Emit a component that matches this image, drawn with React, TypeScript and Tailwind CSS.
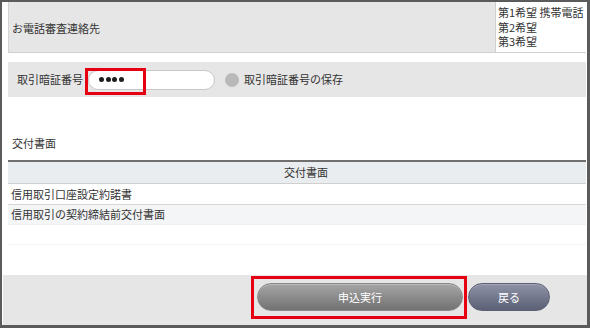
import React from "react";

export default function App() {
  const font = { fontFamily: '"Noto Sans CJK JP", "Noto Sans", sans-serif' };
  return (
    <div
      className="w-[590px] h-[328px] bg-white border-t-2 border-l-2 border-r-[3px] border-b-[3px] border-[#5b5b5b] flex flex-col overflow-hidden text-[11px] text-[#333]"
      style={font}
    >
      <div className="pl-[6px] pr-[1px] flex flex-col">
        {/* Row 1 */}
        <div className="flex h-[51px] border-b border-[#cfcfcf]">
          <div className="flex-1 bg-[#e6e6e6] border-l border-[#d4d4d4] flex items-center pl-[3px] pt-[2px]">
            お電話審査連絡先
          </div>
          <div className="w-[91px] border-l border-[#cfcfcf] bg-white pl-[2px] pt-[3px] leading-[14.5px] whitespace-nowrap overflow-hidden">
            <div>第1希望 携帯電話 (</div>
            <div>第2希望</div>
            <div>第3希望</div>
          </div>
        </div>

        {/* Row 2 */}
        <div className="mt-[9px] h-[35px] bg-[#e6e6e6] flex items-center pl-[9px]">
          <span>取引暗証番号</span>
          <div className="relative ml-[5px]">
            <div className="w-[127px] h-[20px] bg-white border border-[#c8c8c8] rounded-full flex items-center pl-[10px] gap-[1.5px]">
              <span className="w-[5px] h-[5px] rounded-full bg-[#1e1e1e]" />
              <span className="w-[5px] h-[5px] rounded-full bg-[#1e1e1e]" />
              <span className="w-[5px] h-[5px] rounded-full bg-[#1e1e1e]" />
              <span className="w-[5px] h-[5px] rounded-full bg-[#1e1e1e]" />
            </div>
            <div className="absolute left-[-3px] top-[-2px] w-[61px] h-[27px] border-[3px] border-[#e60012]" />
          </div>
          <span className="ml-[10px] w-[14px] h-[14px] rounded-full bg-[#b9b9b9]" />
          <span className="ml-[5px]">取引暗証番号の保存</span>
        </div>

        {/* Section title */}
        <div className="mt-[38px] pl-[4px] leading-[16px]">交付書面</div>

        {/* Table */}
        <div className="mt-[9px] border-t-2 border-[#707070]">
          <div className="h-[22px] bg-[#e9edf0] border-b border-[#cfcfcf] flex items-center justify-center pl-[18px]">
            交付書面
          </div>
          <div className="h-[21px] bg-white border-b border-[#d6d6d6] flex items-center pl-[3px]">
            信用取引口座設定約諾書
          </div>
          <div className="h-[20px] bg-[#f4f5f7] border-b border-[#f0f0f0] flex items-center pl-[3px]">
            信用取引の契約締結前交付書面
          </div>
          <div className="h-[20px] bg-white border-b border-[#f3f3f3]" />
        </div>
      </div>

      <div className="flex-1" />

      {/* Footer */}
      <div className="ml-[1px] h-[50px] bg-[#e6e6e6] flex items-start pt-[8px] pl-[254px]">
        <div className="relative">
          <button
            className="w-[206px] h-[28px] rounded-full border border-[#8a8a8a] bg-gradient-to-b from-[#a6a6a6] to-[#727272] text-white text-[11px] flex items-center justify-center shadow-[inset_0_1px_0_rgba(255,255,255,0.25)]"
            style={font}
          >
            申込実行
          </button>
          <div className="absolute left-[-6px] top-[-7px] w-[216px] h-[43px] border-[3px] border-[#e60012]" />
        </div>
        <button
          className="ml-[5px] w-[82px] h-[28px] rounded-full border border-[#5c6074] bg-gradient-to-b from-[#8f93a8] to-[#5c6075] text-white text-[11px] flex items-center justify-center shadow-[inset_0_1px_0_rgba(255,255,255,0.2)]"
          style={font}
        >
          戻る
        </button>
      </div>
    </div>
  );
}
